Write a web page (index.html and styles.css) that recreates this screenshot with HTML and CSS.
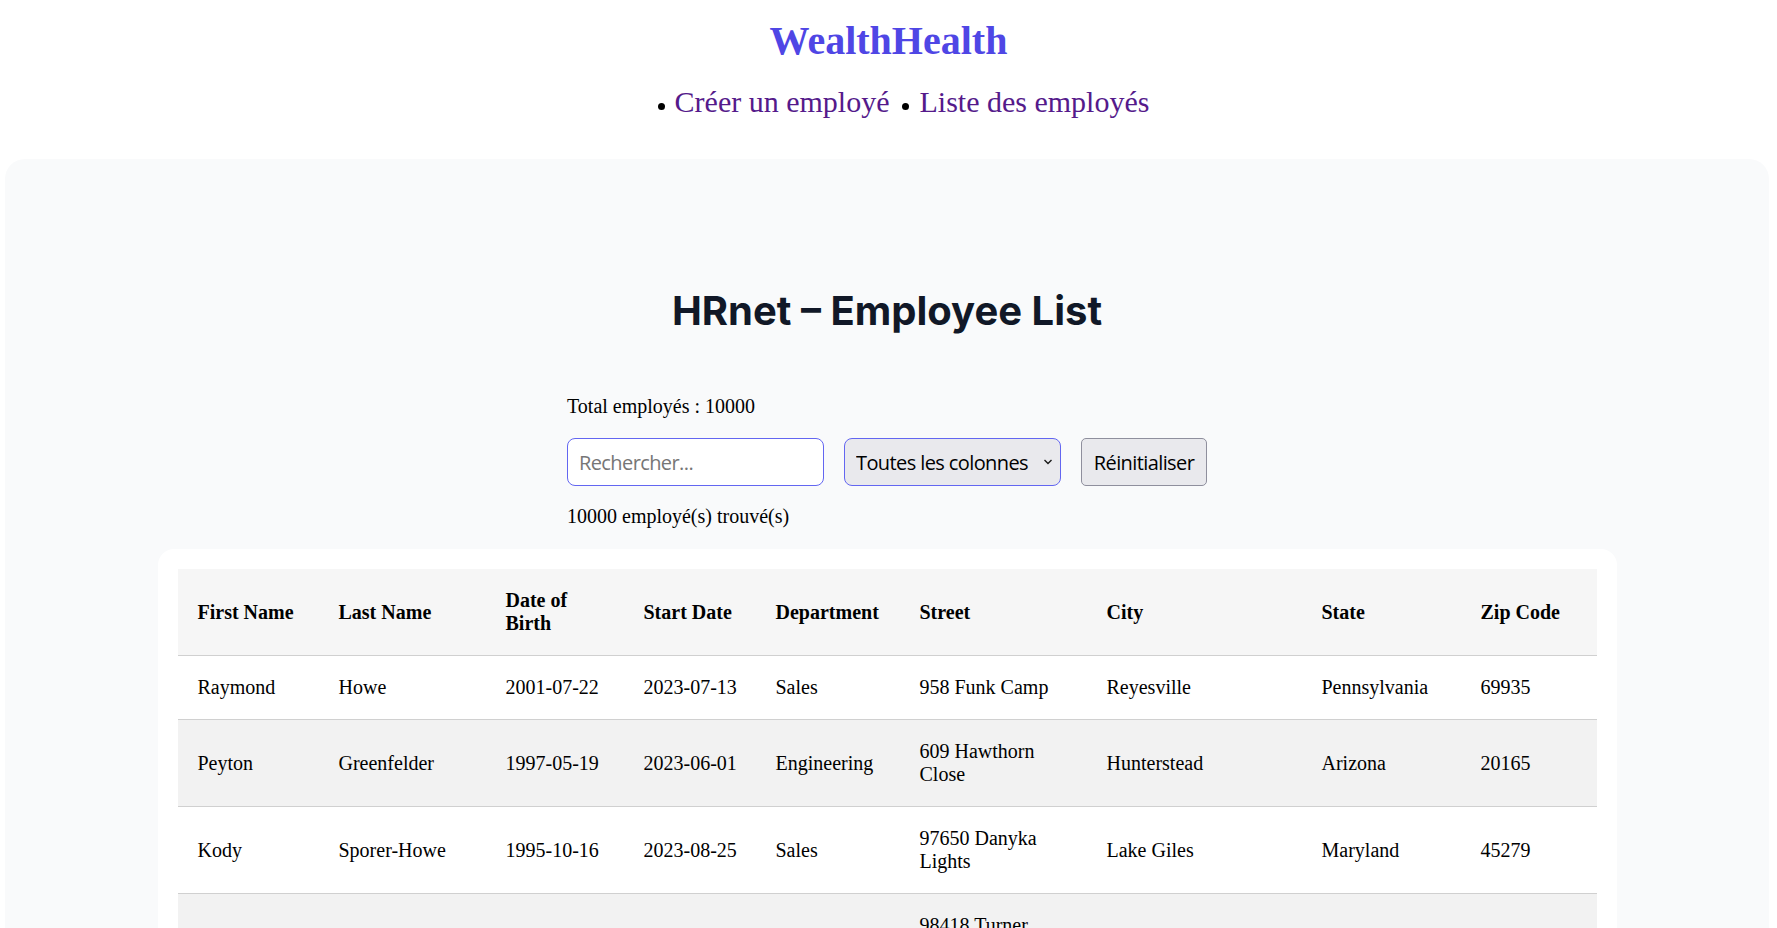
FILE: index.html
```html
<!DOCTYPE html>
<html lang="fr">
<head>
<meta charset="utf-8">
<title>HRnet – Employee List</title>
<link rel="stylesheet" href="styles.css">
</head>
<body>
<header class="site-header">
  <h1 class="brand">WealthHealth</h1>
  <nav>
    <ul class="nav-list">
      <li class="nav-item"><span class="dot"></span><a href="#" class="nav-link">Créer un employé</a></li>
      <li class="nav-item"><span class="dot"></span><a href="#" class="nav-link">Liste des employés</a></li>
    </ul>
  </nav>
</header>
<main class="panel">
  <h2 class="page-title">HRnet – Employee List</h2>
  <div class="controls-wrap">
    <p class="total">Total employés : 10000</p>
    <div class="controls">
      <input class="search" type="text" placeholder="Rechercher...">
      <div class="select-wrap">
        <select class="column-select">
          <option>Toutes les colonnes</option>
        </select>
        <svg class="chevron" width="10" height="6" viewBox="0 0 10 6"><path d="M1.5 1 L5 4.5 L8.5 1" fill="none" stroke="#1a1a1a" stroke-width="1.4"/></svg>
      </div>
      <button class="reset" type="button">Réinitialiser</button>
    </div>
    <p class="found">10000 employé(s) trouvé(s)</p>
  </div>
  <div class="table-card">
    <table class="emp-table">
      <colgroup>
        <col class="c1"><col class="c2"><col class="c3"><col class="c4"><col class="c5"><col class="c6"><col class="c7"><col class="c8"><col class="c9">
      </colgroup>
      <thead>
        <tr>
          <th>First Name</th><th>Last Name</th><th>Date of Birth</th><th>Start Date</th><th>Department</th><th>Street</th><th>City</th><th>State</th><th>Zip Code</th>
        </tr>
      </thead>
      <tbody>
        <tr><td>Raymond</td><td>Howe</td><td class="nw">2001-07-22</td><td class="nw">2023-07-13</td><td>Sales</td><td>958 Funk Camp</td><td>Reyesville</td><td>Pennsylvania</td><td>69935</td></tr>
        <tr><td>Peyton</td><td>Greenfelder</td><td class="nw">1997-05-19</td><td class="nw">2023-06-01</td><td>Engineering</td><td>609 Hawthorn Close</td><td>Hunterstead</td><td>Arizona</td><td>20165</td></tr>
        <tr><td>Kody</td><td>Sporer-Howe</td><td class="nw">1995-10-16</td><td class="nw">2023-08-25</td><td>Sales</td><td>97650 Danyka Lights</td><td>Lake Giles</td><td>Maryland</td><td>45279</td></tr>
        <tr><td>Mallory</td><td>Kuhn</td><td class="nw">1988-03-02</td><td class="nw">2023-05-17</td><td>Marketing</td><td>98418 Turner Stream</td><td>Port Elna</td><td>Ohio</td><td>31842</td></tr>
        <tr><td>Dana</td><td>Bogisich</td><td class="nw">1992-11-28</td><td class="nw">2023-02-09</td><td>Legal</td><td>412 Oak Street</td><td>Lake Tania</td><td>Texas</td><td>77021</td></tr>
      </tbody>
    </table>
  </div>
</main>
</body>
</html>
```

FILE: styles.css
```css
html, body {
  margin: 0;
  padding: 0;
  background: #ffffff;
}

body {
  font-family: "Liberation Serif", "Times New Roman", serif;
  font-size: 20px;
  line-height: 23px;
  color: #000;
}

.site-header {
  padding-top: 18px;
  text-align: center;
}

.brand {
  margin: 0;
  font-family: "Liberation Serif", "Times New Roman", serif;
  font-size: 40px;
  line-height: 46px;
  font-weight: 700;
  color: #4f46e5;
}

.nav-list {
  list-style: none;
  margin: 21px 0 0 0;
  padding: 0 0 0 30px;
  display: flex;
  justify-content: center;
  gap: 13px;
  font-size: 30px;
  line-height: 34px;
}

.nav-item {
  display: block;
}

.dot {
  display: inline-block;
  width: 7px;
  height: 7px;
  border-radius: 50%;
  background: #000;
  margin: 0 10px 2px 0;
}

.nav-link {
  color: #551a8b;
  text-decoration: none;
}

.panel {
  margin: 40px 8px 0 5px;
  background: #f9fafb;
  border-radius: 20px 20px 0 0;
  padding: 128px 0 60px;
}

.page-title {
  margin: 0;
  text-align: center;
  font-family: Inter, "Noto Sans", sans-serif;
  font-weight: 700;
  font-size: 40px;
  line-height: 48px;
  color: #111827;
}

.controls-wrap {
  width: 640px;
  margin: 60px auto 0;
}

.total, .found {
  margin: 0;
}

.controls {
  display: flex;
  gap: 20px;
  margin-top: 20px;
  height: 48px;
}

.search,
.column-select,
.reset {
  font-family: "Open Sans", "Noto Sans", sans-serif;
  font-size: 20px;
  letter-spacing: -0.6px;
  color: #000;
}

.search {
  box-sizing: border-box;
  width: 257px;
  height: 48px;
  border: 1px solid #6366f1;
  border-radius: 8px;
  padding: 0 11px;
  background: #fff;
  outline: none;
}

.search::placeholder {
  color: #767676;
}

.select-wrap {
  position: relative;
  width: 217px;
  height: 48px;
}

.column-select {
  -webkit-appearance: none;
  appearance: none;
  box-sizing: border-box;
  width: 217px;
  height: 48px;
  border: 1px solid #6366f1;
  border-radius: 8px;
  background: #e9e9ed;
  padding: 0 24px 0 11px;
}

.chevron {
  position: absolute;
  right: 8px;
  top: 21px;
  pointer-events: none;
}

.reset {
  box-sizing: border-box;
  width: 126px;
  height: 48px;
  border: 1px solid #8f8f9d;
  border-radius: 5px;
  background: #e9e9ed;
  padding: 0;
}

.found {
  margin-top: 19px;
}

.table-card {
  width: 1459px;
  box-sizing: border-box;
  margin: 21px auto 0;
  padding: 20px;
  background: #fff;
  border-radius: 16px;
}

.emp-table {
  width: 1419px;
  table-layout: fixed;
  border-collapse: collapse;
}

.c1 { width: 141px; }
.c2 { width: 167px; }
.c3 { width: 138px; }
.c4 { width: 132px; }
.c5 { width: 144px; }
.c6 { width: 187px; }
.c7 { width: 215px; }
.c8 { width: 159px; }
.c9 { width: 136px; }

.emp-table th,
.emp-table td {
  padding: 20px;
  text-align: left;
  vertical-align: middle;
  border-bottom: 1px solid #d0d0d0;
}

.emp-table td.nw {
  white-space: nowrap;
}

.emp-table th {
  font-weight: 700;
}

.emp-table thead tr {
  background: #f6f6f6;
}

.emp-table tbody tr:nth-child(even) {
  background: #f2f2f2;
}
```
